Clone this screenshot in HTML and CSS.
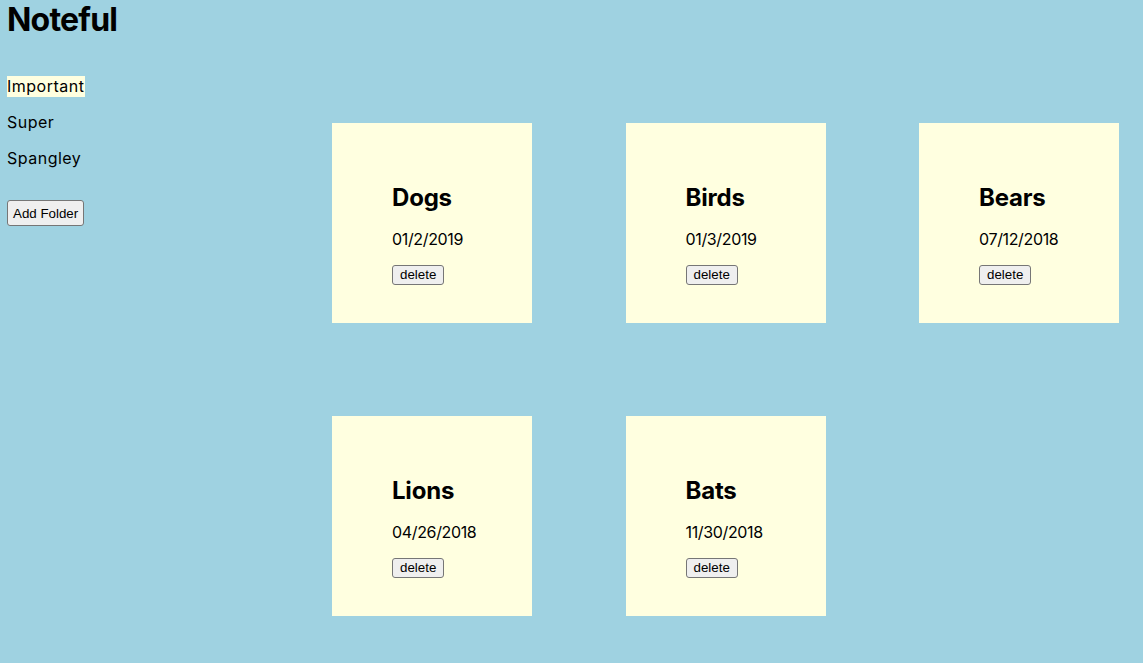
FILE: index.html
```html
<!DOCTYPE html>
<html lang="en">
<head>
<meta charset="utf-8">
<title>Noteful</title>
<link rel="stylesheet" href="styles.css">
</head>
<body>
<div class="app">
  <aside class="sidebar">
    <h1 class="title">Noteful</h1>
    <ul class="folders">
      <li class="folder"><span class="folder-name active">Important</span></li>
      <li class="folder"><span class="folder-name">Super</span></li>
      <li class="folder"><span class="folder-name">Spangley</span></li>
    </ul>
    <button class="btn add-btn">Add Folder</button>
  </aside>
  <main class="notes">
    <div class="note">
      <h2 class="note-title">Dogs</h2>
      <p class="note-date">01/2/2019</p>
      <button class="btn">delete</button>
    </div>
    <div class="note">
      <h2 class="note-title">Birds</h2>
      <p class="note-date">01/3/2019</p>
      <button class="btn">delete</button>
    </div>
    <div class="note">
      <h2 class="note-title">Bears</h2>
      <p class="note-date">07/12/2018</p>
      <button class="btn">delete</button>
    </div>
    <div class="note">
      <h2 class="note-title">Lions</h2>
      <p class="note-date">04/26/2018</p>
      <button class="btn">delete</button>
    </div>
    <div class="note">
      <h2 class="note-title">Bats</h2>
      <p class="note-date">11/30/2018</p>
      <button class="btn">delete</button>
    </div>
  </main>
</div>
</body>
</html>
```
FILE: styles.css
```css
html, body {
  margin: 0;
  padding: 0;
}
body {
  background: #9fd2e1;
  font-family: Inter, "Noto Sans", sans-serif;
  color: #000;
  min-height: 663px;
}
.app {
  display: flex;
  align-items: flex-start;
}
.sidebar {
  width: 278px;
  padding-left: 7px;
  flex-shrink: 0;
}
.title {
  margin: 0;
  font-size: 32px;
  font-weight: 700;
  line-height: normal;
  letter-spacing: -0.8px;
}
.folders {
  list-style: none;
  margin: 37px 0 0 0;
  padding: 0;
}
.folder {
  height: 21px;
  margin-bottom: 15px;
  font-size: 16px;
}
.folder:last-child {
  margin-bottom: 0;
}
.folder-name {
  display: inline-block;
  line-height: 21px;
  letter-spacing: 0.5px;
  padding-right: 1px;
}
.folder-name.active {
  background: #ffffe0;
}
.btn {
  font-family: "Liberation Sans", Arial, sans-serif;
  font-size: 13.333px;
  background: #efefef;
  border: 1px solid #767676;
  border-radius: 3px;
  padding: 1px 7px;
  color: #000;
  line-height: normal;
}
.add-btn {
  margin-top: 31px;
  padding: 4px 5px;
  height: 26px;
}
.notes {
  display: grid;
  grid-template-columns: repeat(3, 200px);
  column-gap: 93.5px;
  row-gap: 93px;
  padding-left: 47px;
  padding-top: 123px;
}
.note {
  width: 200px;
  height: 200px;
  box-sizing: border-box;
  background: #ffffe0;
  padding: 60px 0 0 60px;
}
.note-title {
  margin: 0;
  font-size: 24px;
  font-weight: 700;
  line-height: normal;
  letter-spacing: -0.2px;
}
.note-date {
  margin: 17px 0 14px 0;
  font-size: 16px;
  line-height: normal;
  letter-spacing: -0.35px;
}
.note .btn {
  height: 20px;
}
```
